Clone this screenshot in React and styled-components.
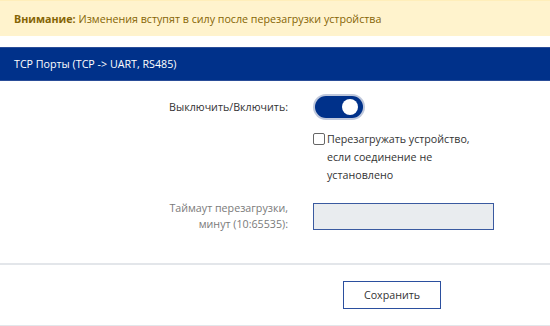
import styled, { createGlobalStyle } from "styled-components";

const GlobalStyle = createGlobalStyle`
	html, body {
		margin: 0;
		padding: 0;
		background: #fff;
	}
	body {
		font-family: "Open Sans", "Liberation Sans", sans-serif;
		font-size: 10.7px;
		color: #333;
	}
`;

const Page = styled.div`
	width: 550px;
	height: 326px;
	overflow: hidden;
`;

const Alert = styled.div`
	height: 36px;
	box-sizing: border-box;
	padding: 0 14px;
	display: flex;
	align-items: center;
	background: #fff3cd;
	border-top: 1px solid #ffeeba;
	color: #856404;

	b {
		font-weight: 700;
		margin-right: 3px;
	}
`;

const Card = styled.section`
	margin-top: 11px;
`;

const CardHeader = styled.div`
	height: 34px;
	box-sizing: border-box;
	padding: 0 14px;
	display: flex;
	align-items: center;
	background: #00318a;
	border-top: 1px solid #2a4d98;
	border-bottom: 1px solid #2a4d98;
	color: #fff;
`;

const Form = styled.div`
	display: grid;
	grid-template-columns: 288px 181px;
	column-gap: 25px;
	align-items: center;
	padding: 15px 0 31px;
`;

const Label = styled.label`
	text-align: right;
	line-height: 16px;
	margin-top: ${({ top }) => top || 0}px;
	color: ${({ muted }) => (muted ? "#7a7a7a" : "#333")};
`;

const Cell = styled.div`
	grid-column: ${({ wide }) => (wide ? "2" : "auto")};
	margin-top: ${({ top }) => top || 0}px;
`;

const Switch = styled.button`
	display: block;
	width: 48px;
	height: 22px;
	margin-left: 2px;
	padding: 0;
	border: none;
	border-radius: 11px;
	background: #00318a;
	box-shadow: 0 0 0 2px #bfc8dc;
	position: relative;
	cursor: pointer;

	&::after {
		content: "";
		position: absolute;
		top: 3px;
		right: 5px;
		width: 16px;
		height: 16px;
		border-radius: 50%;
		background: #fff;
	}
`;

const Check = styled.label`
	display: flex;
	align-items: flex-start;
	gap: 2px;
	width: 170px;
	line-height: 18px;
	color: #333;

	input {
		appearance: none;
		width: 12px;
		height: 12px;
		margin: 3px 0 0 0;
		flex: none;
		border: 1px solid #666;
		border-radius: 2px;
		background: #fff;
	}
`;

const Input = styled.input`
	display: block;
	width: 181px;
	height: 27px;
	box-sizing: border-box;
	background: #e9ecef;
	border: 1px solid #3a5aa0;
	border-radius: 0;
	font: inherit;
`;

const Footer = styled.div`
	border-top: 2px solid #e3e6ea;
	border-bottom: 2px solid #e3e6ea;
	height: 60px;
	display: flex;
	align-items: center;
	padding-left: 343px;
`;

const Button = styled.button`
	width: 98px;
	height: 28px;
	box-sizing: border-box;
	background: #fff;
	border: 1px solid #2b4f9e;
	border-radius: 0;
	font: inherit;
	color: #333;
	cursor: pointer;
`;

export default function App() {
	return (
		<Page>
			<GlobalStyle />
			<Alert>
				<b>Внимание:</b> Изменения вступят в силу после перезагрузки устройства
			</Alert>
			<Card>
				<CardHeader>TCP Порты (TCP -&gt; UART, RS485)</CardHeader>
				<Form>
					<Label>Выключить/Включить:</Label>
					<Cell>
						<Switch aria-label="toggle" />
					</Cell>
					<Cell wide top={12}>
						<Check>
							<input type="checkbox" />
							<span>Перезагружать устройство, если соединение не установлено</span>
						</Check>
					</Cell>
					<Label muted top={16}>
						Таймаут перезагрузки,
						<br />
						минут (10:65535):
					</Label>
					<Cell top={16}>
						<Input />
					</Cell>
				</Form>
				<Footer>
					<Button>Сохранить</Button>
				</Footer>
			</Card>
		</Page>
	);
}
